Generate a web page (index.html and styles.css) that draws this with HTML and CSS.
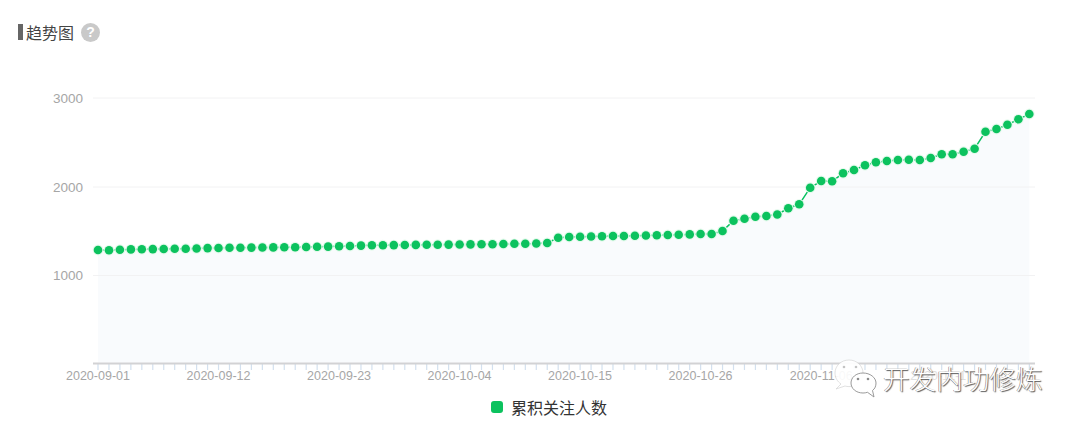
FILE: index.html
```html
<!DOCTYPE html>
<html lang="zh">
<head>
<meta charset="utf-8">
<title>趋势图</title>
<link rel="stylesheet" href="styles.css">
</head>
<body>
<main class="page">
  <header class="head">
    <span class="head-bar"></span>
    <h2 class="head-title">趋势图</h2>
    <span class="head-help">?</span>
  </header>

  <svg class="chart" viewBox="0 44 1080 346" width="1080" height="346" xmlns="http://www.w3.org/2000/svg">
    <defs>
      <marker id="dot" markerUnits="userSpaceOnUse" markerWidth="14" markerHeight="14" refX="7" refY="7">
        <circle class="dot-halo" cx="7" cy="7" r="5.400"/>
        <circle class="dot" cx="7" cy="7" r="4.300"/>
      </marker>
    </defs>
    <polygon class="area" points="98,250 98,362.5 1029.3,362.5 1029.3,114 1018.4,119.3 1007.4,124.7 996.5,129 985.5,131.7 974.6,148.7 963.6,151.7 952.6,154.3 941.7,154.3 930.7,158 919.8,160 908.8,159.7 897.9,160 886.9,161 875.9,162.3 865,165.3 854,170 843.1,173.3 832.1,181.3 821.2,181 810.2,187.7 799.2,204.3 788.3,208.3 777.3,214.5 766.4,216 755.4,216.7 744.5,218.7 733.5,220.7 722.5,231 711.6,234 700.6,234 558.2,237.7 547.2,243"/>
    <line class="grid" x1="93" y1="98" x2="1035" y2="98"/>
    <line class="grid" x1="93" y1="187" x2="1035" y2="187"/>
    <line class="grid" x1="93" y1="275.5" x2="1035" y2="275.5"/>
    <text class="ylabel" x="83" y="103">3000</text>
    <text class="ylabel" x="83" y="192">2000</text>
    <text class="ylabel" x="83" y="280">1000</text>
    <line class="ticks" x1="97.4" y1="367" x2="1031" y2="367"/>
    <line class="axis" x1="93" y1="363.5" x2="1035" y2="363.5"/>
    <text class="xlabel" x="98" y="379.500">2020-09-01</text>
    <text class="xlabel" x="218.5" y="379.500">2020-09-12</text>
    <text class="xlabel" x="339.1" y="379.500">2020-09-23</text>
    <text class="xlabel" x="459.6" y="379.500">2020-10-04</text>
    <text class="xlabel" x="580.1" y="379.500">2020-10-15</text>
    <text class="xlabel" x="700.6" y="379.500">2020-10-26</text>
    <text class="xlabel" x="821.2" y="379.500">2020-11-06</text>
    <text class="xlabel xlabel-faint" x="941.7" y="379.500">2020-11-17</text>
    <polyline class="series" points="98,250 109,250.3 119.9,249.7 130.9,249.4 141.8,249.3 152.8,249.1 163.7,249 174.7,248.8 185.7,248.7 196.6,248.5 207.6,248.1 218.5,248 229.5,247.8 240.4,247.8 251.4,247.6 262.4,247.5 273.3,247.4 284.3,247.3 295.2,247.2 306.2,247 317.1,246.8 328.1,246.6 339.1,246.3 350,246 361,245.6 371.9,245.3 382.9,245.2 393.8,245.1 404.8,245 415.8,244.9 426.7,244.8 437.7,244.7 448.6,244.6 459.6,244.5 470.5,244.4 481.5,244.3 492.5,244.2 503.4,244 514.4,243.8 525.3,243.7 536.3,243.5 547.2,243 558.2,237.7 569.2,237 580.1,236.7 591.1,236.5 602,236.3 613,236 623.9,236 634.9,235.7 645.9,235.5 656.8,235.3 667.8,235 678.7,234.7 689.7,234.4 700.6,234 711.6,234 722.5,231 733.5,220.7 744.5,218.7 755.4,216.7 766.4,216 777.3,214.5 788.3,208.3 799.2,204.3 810.2,187.7 821.2,181 832.1,181.3 843.1,173.3 854,170 865,165.3 875.9,162.3 886.9,161 897.9,160 908.8,159.7 919.8,160 930.7,158 941.7,154.3 952.6,154.3 963.6,151.7 974.6,148.7 985.5,131.7 996.5,129 1007.4,124.7 1018.4,119.3 1029.3,114"/>
  </svg>

  <footer class="legend">
    <span class="legend-key"></span>
    <span class="legend-text">累积关注人数</span>
  </footer>

  <aside class="mark">
    <svg class="mark-icon" viewBox="0 0 44 40" width="44" height="40" xmlns="http://www.w3.org/2000/svg">
      <path class="bubble-back" d="M15 2C7 2 1 8 1 15c0 5 2.500 8.500 6 11l-5 5 9-3c1.300 .4 2.700 .6 4 .6 8 0 14-6 14-13.600C29 8 23 2 15 2z"/>
      <circle class="eye-back" cx="10" cy="9" r="1.300"/>
      <circle class="eye-back" cx="22" cy="9" r="1.300"/>
      <path class="bubble" d="M29 15c-7 0-12 4.500-12 10s5 10 12 10c1.600 0 3-.2 4.500-.7L40 39l-1.500-6.500c2.500-1.800 3.500-4.500 3.500-7.500 0-5.500-6-10-13-10z"/>
      <circle class="eye" cx="24" cy="21" r="1.300"/>
      <circle class="eye" cx="34" cy="21" r="1.300"/>
    </svg>
    <span class="mark-text">开发内功修炼</span>
  </aside>
</main>
</body>
</html>
```
FILE: styles.css
```css
html, body { margin: 0; padding: 0; background: #fff; }
.page {
  position: relative;
  width: 1080px;
  height: 429px;
  overflow: hidden;
  font-family: "Liberation Sans", "Noto Sans CJK SC", sans-serif;
}
.head {
  display: flex;
  align-items: center;
  height: 44px;
  padding: 20px 0 0 18px;
  box-sizing: border-box;
}
.head-bar { width: 5px; height: 16px; background: #666; margin-right: 3px; }
.head-title {
  margin: 0;
  font: 400 16px/24px "Noto Sans CJK SC", sans-serif;
  color: #444;
}
.head-help {
  width: 19px;
  height: 19px;
  margin-left: 7px;
  border-radius: 50%;
  background: #c9c9c9;
  color: #fff;
  font: 700 14px/19px "Liberation Sans", sans-serif;
  text-align: center;
}
.chart { display: block; }
.area { fill: #f9fbfd; }
.grid { stroke: #f2f2f3; stroke-width: 1; }
.axis { stroke: #d2d2d4; stroke-width: 2; }
.ticks { stroke: #d3e0ee; stroke-width: 6; stroke-dasharray: 1.2 9.757; }
.ylabel, .xlabel { fill: #a6a6a6; font-family: "Liberation Sans", sans-serif; }
.ylabel { font-size: 13.5px; text-anchor: end; }
.xlabel { font-size: 12.5px; text-anchor: middle; }
.xlabel-faint { opacity: .35; }
.series {
  fill: none;
  stroke: #07c160;
  stroke-width: 1.5;
  marker-start: url(#dot);
  marker-mid: url(#dot);
  marker-end: url(#dot);
}
.dot-halo { fill: #e4f9ec; }
.dot { fill: #0cc25e; }
.legend {
  display: flex;
  align-items: center;
  justify-content: center;
  gap: 8px;
  height: 34px;
  padding-left: 18px;
  box-sizing: border-box;
}
.legend-key { width: 12px; height: 12px; border-radius: 3px; background: #0cc25e; }
.legend-text { font: 400 16px/24px "Noto Sans CJK SC", sans-serif; color: #333; }
.mark {
  position: absolute;
  left: 834px;
  top: 358px;
  display: flex;
  align-items: center;
  gap: 5px;
}
.mark-icon { display: block; }
.bubble-back { fill: rgba(255,255,255,.92); stroke: #d4d4d4; stroke-width: .7; }
.bubble { fill: rgba(255,255,255,.95); stroke: #8f8f8f; stroke-width: .9; }
.eye { fill: #8c8c8c; }
.eye-back { fill: #c4c4c4; }
.mark-text {
  font: 300 26.6px/40px "Noto Sans CJK SC", sans-serif;
  color: #fff;
  text-shadow: 1px 1px 1px #555, -.5px 0 .5px #777;
  white-space: nowrap;
}
```
